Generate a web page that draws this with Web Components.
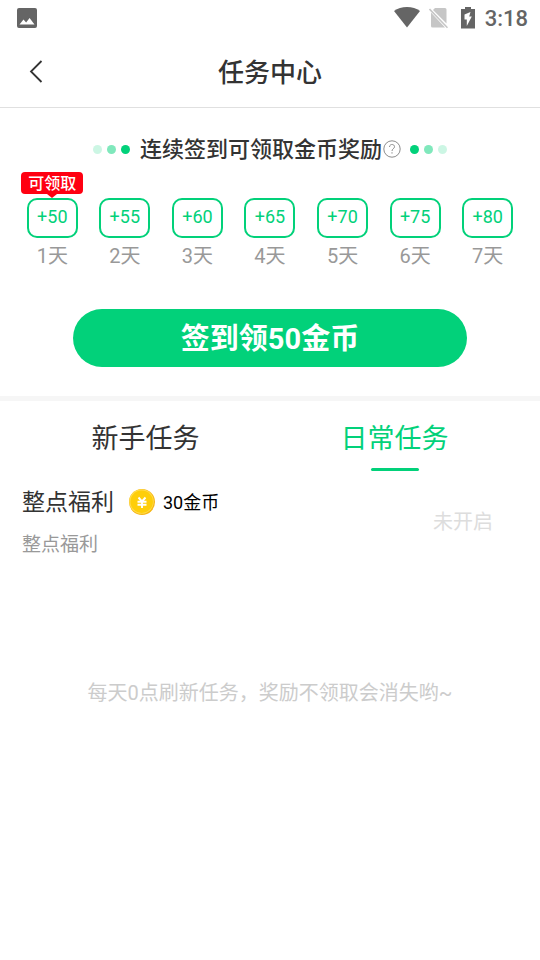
<!DOCTYPE html>
<html lang="zh-CN">
<head>
<meta charset="utf-8">
<meta name="viewport" content="width=device-width, initial-scale=1">
<title>任务中心</title>
<style>
html, body { margin: 0; background: #fff; }
body {
  --green: #02d17a;
  font-family: Roboto, "Noto Sans CJK SC", sans-serif;
  color: #333;
}
</style>
</head>
<body>
<task-center></task-center>
<script>
const define = (name, html, setup) => {
  const template = document.createElement('template');
  template.innerHTML = `<style>
    *, :host { box-sizing: border-box; }
    button { font: inherit; color: inherit; border: 0; padding: 0; margin: 0; background: none; cursor: pointer; }
    svg { display: block; }
  </style>` + html;
  customElements.define(name, class extends HTMLElement {
    constructor() {
      super();
      this.attachShadow({ mode: 'open' }).append(template.content.cloneNode(true));
    }
    connectedCallback() { if (setup) setup(this, this.shadowRoot); }
  });
};

define('status-bar', `
<style>
  :host { display: flex; align-items: center; height: 36px; padding: 0 12px 0 17px; color: #656565; }
  .right { display: flex; align-items: center; margin-left: auto; }
  .sim { margin-left: 9px; }
  .battery { margin-left: 13px; }
  time { margin-left: 10px; font-size: 22px; line-height: 36px; padding-top: 2px; font-weight: 500; }
</style>
<svg width="20" height="20" viewBox="0 0 20 20" aria-hidden="true"><path fill="currentColor" fill-rule="evenodd" d="M2 0h16a2 2 0 0 1 2 2v16a2 2 0 0 1-2 2H2a2 2 0 0 1-2-2V2a2 2 0 0 1 2-2Zm.5 16.500h15L12.600 10l-3.500 4.500L6.500 11.500Z"/></svg>
<div class="right">
  <svg width="26" height="22" viewBox="0 0 26 22" aria-hidden="true"><path fill="currentColor" d="M13 20.500 0 4C3.500 1.300 8 0 13 0S22.500 1.300 26 4Z"/></svg>
  <svg class="sim" width="19" height="22" viewBox="0 0 19 22" aria-hidden="true"><path fill="#c6c6c6" d="M6 1h10a1.500 1.500 0 0 1 1.500 1.500V16.500L4 3Z"/><path fill="#c6c6c6" d="M2 5.500v13.500a1.500 1.500 0 0 0 1.500 1.500H16Z"/><path d="M.5 2 18.500 20.800" stroke="#c6c6c6" stroke-width="1.600"/></svg>
  <svg class="battery" width="14" height="22" viewBox="0 0 14 22" aria-hidden="true"><path fill="currentColor" fill-rule="evenodd" d="M4 0h6v2h4v19.500H0V2h4ZM9.500 5 3.500 7.500v5h2.300V19l5-9.500H8.200Z"/></svg>
  <time><slot></slot></time>
</div>`);

define('nav-header', `
<style>
  :host { display: grid; grid-template-columns: 72px 1fr 72px; align-items: center; height: 72px; border-bottom: 1px solid #e0e0e0; }
  button { display: grid; place-items: center; height: 71px; }
  h1 { margin: 0; padding-top: 2px; font-size: 26px; line-height: 36px; font-weight: 500; text-align: center; }
</style>
<button aria-label="返回"><svg width="14" height="24" viewBox="0 0 14 24" fill="none" stroke="#333" stroke-width="1.800"><path d="M12.500 1 2 11.500 12.500 22"/></svg></button>
<h1><slot></slot></h1>`);

define('dot-trio', `
<style>
  :host { display: flex; gap: 5px; }
  :host([flip]) { flex-direction: row-reverse; }
  i { width: 9px; height: 9px; border-radius: 50%; background: var(--green); }
  i:nth-of-type(1) { opacity: .2; }
  i:nth-of-type(2) { opacity: .5; }
</style><i></i><i></i><i></i>`);

define('section-title', `
<style>
  :host { display: flex; align-items: center; justify-content: center; }
  h2 { margin: 0 1px 0 10px; padding-top: 2px; font-size: 22px; line-height: 28px; font-weight: 500; white-space: nowrap; }
  button { margin-right: 9px; }
</style>
<dot-trio></dot-trio>
<h2><slot></slot></h2>
<button aria-label="签到说明"><svg width="18" height="18" viewBox="0 0 18 18" fill="none" stroke="#8c8c8c"><circle cx="9" cy="9" r="8.200"/><path d="M6.500 7C6.500 3.700 11.500 3.700 11.500 6.700c0 2-2.500 2.100-2.500 4.300" /><path d="M9 12.200v1.400"/></svg></button>
<dot-trio flip></dot-trio>`);

define('sign-day', `
<style>
  :host { display: flex; flex-direction: column; align-items: center; position: relative; }
  .coins { width: 51px; height: 40px; border: 2px solid var(--green); border-radius: 10px; color: var(--green); font-size: 18px; line-height: 34px; text-align: center; }
  .day { margin-top: 3px; font-size: 20px; line-height: 30px; color: #999; }
  .tip { display: none; position: absolute; top: -26px; left: 50%; transform: translateX(-50%); padding: 1px 7px 0; border-radius: 4px; background: #ff0011; color: #fff; font-size: 16px; line-height: 21px; font-weight: 500; white-space: nowrap; }
  :host([tip]) .tip { display: block; }
  .tip::after { content: ""; position: absolute; top: 100%; left: 50%; margin-left: -5px; border: 5px solid transparent; border-top: 4px solid #ff0011; border-bottom: 0; }
</style>
<span class="tip"></span>
<span class="coins"><slot></slot></span>
<span class="day"></span>`, (el, root) => {
  root.querySelector('.tip').textContent = el.getAttribute('tip') || '';
  root.querySelector('.day').textContent = el.getAttribute('day');
});

define('sign-panel', `
<style>
  :host { display: block; padding: 26px 16px 29px; border-bottom: 5px solid #f6f6f6; }
  .days { display: grid; grid-template-columns: repeat(7, 1fr); margin-top: 34px; }
  .claim { display: block; width: calc(100% - 114px); margin: 38px auto 0; height: 58px; padding-top: 2px; border-radius: 29px; background: var(--green); color: #fff; font-size: 29px; line-height: 56px; font-weight: 700; }
</style>
<section-title>连续签到可领取金币奖励</section-title>
<div class="days"><slot></slot></div>
<button class="claim">签到领50金币</button>`);

define('task-tabs', `
<style>
  :host { display: grid; grid-template-columns: 1fr 1fr; padding: 0 21px; }
  button { display: flex; flex-direction: column; align-items: center; font-size: 27px; line-height: 40px; padding-top: 18px; }
  button::after { content: ""; width: 48px; height: 3px; margin-top: 9px; border-radius: 2px; }
  [aria-selected=true] { color: var(--green); }
  [aria-selected=true]::after { background: var(--green); }
</style>
<button role="tab" aria-selected="false">新手任务</button>
<button role="tab" aria-selected="true">日常任务</button>`, el => el.setAttribute('role', 'tablist'));

define('task-row', `
<style>
  :host { display: flex; align-items: center; justify-content: space-between; padding: 14px 47px 0 22px; }
  .head { display: flex; align-items: center; }
  h3 { margin: 0 15px 0 0; padding-top: 2px; font-size: 23px; line-height: 32px; font-weight: 400; }
  .reward { margin-left: 8px; padding-top: 2px; font-size: 18px; line-height: 32px; color: #000; }
  p { margin: 12px 0 0; font-size: 19px; line-height: 28px; color: #999; }
  .state { font-size: 20px; line-height: 30px; color: #ddd; }
</style>
<div>
  <div class="head">
    <h3><slot name="title"></slot></h3>
    <svg width="26" height="26" viewBox="0 0 26 26" aria-hidden="true"><circle cx="13" cy="13" r="13" fill="#f6b513"/><circle cx="12.500" cy="12.500" r="12.300" fill="#ffdc4a"/><circle cx="12.700" cy="12.700" r="11.200" fill="#fece0a"/><path d="m9.500 8.500 3.500 4 3.500-4M8.500 12.700h9M8.500 15.700h9M13 12.500v6.500" fill="none" stroke="#fff" stroke-width="1.900"/></svg>
    <span class="reward"><slot name="reward"></slot></span>
  </div>
  <p><slot></slot></p>
</div>
<span class="state"><slot name="state"></slot></span>`);

define('task-center', `
<style>
  :host { display: block; }
  .note { margin: 119px 16px 0; font-size: 20px; line-height: 30px; color: #ccc; text-align: center; }
</style>
<status-bar>3:18</status-bar>
<nav-header>任务中心</nav-header>
<main>
  <sign-panel>
    <sign-day day="1天" tip="可领取">+50</sign-day>
    <sign-day day="2天">+55</sign-day>
    <sign-day day="3天">+60</sign-day>
    <sign-day day="4天">+65</sign-day>
    <sign-day day="5天">+70</sign-day>
    <sign-day day="6天">+75</sign-day>
    <sign-day day="7天">+80</sign-day>
  </sign-panel>
  <task-tabs></task-tabs>
  <task-row>
    <span slot="title">整点福利</span>
    <span slot="reward">30金币</span>
    整点福利
    <span slot="state">未开启</span>
  </task-row>
  <p class="note">每天0点刷新任务，奖励不领取会消失哟~</p>
</main>`);
</script>
</body>
</html>
